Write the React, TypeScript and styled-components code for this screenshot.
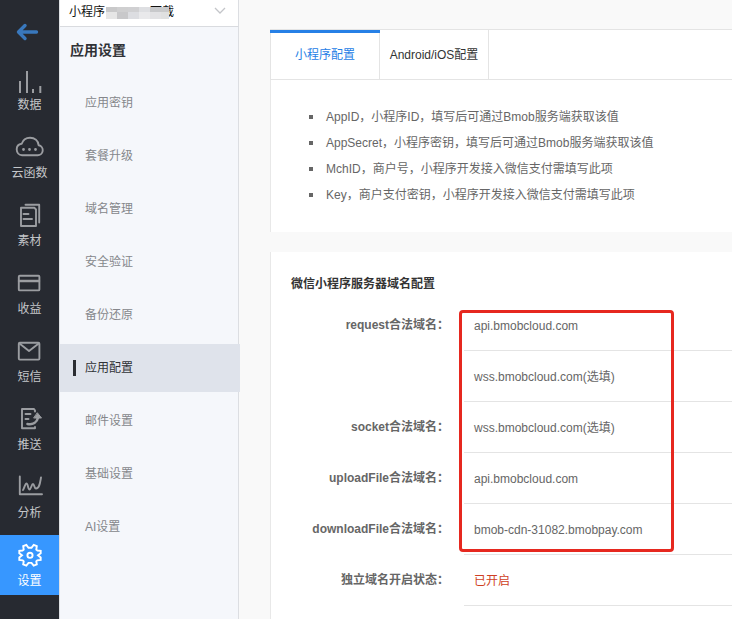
import React from "react";
import styled, { createGlobalStyle } from "styled-components";

const Global = createGlobalStyle`
  *, *::before, *::after { box-sizing: border-box; }
  body { margin: 0; overflow: hidden; background: #f9f9f9; }
  body, #root { font-family: "Liberation Sans", "Noto Sans CJK SC", sans-serif; font-size: 12px; }
`;

const Page = styled.div`
  display: flex;
  width: 732px;
  height: 619px;
  overflow: hidden;
  background: #f9f9f9;
`;

const Rail = styled.nav`
  flex: none;
  width: 59px;
  background: #272a31;
  display: flex;
  flex-direction: column;
  gap: 8px;
`;

const BackLink = styled.div`
  height: 51px;
  padding: 23px 0 0 16px;
`;

const RailItem = styled.div<{ $active?: boolean }>`
  flex: none;
  height: 60px;
  color: ${(p) => (p.$active ? "#fff" : "#c4c6c9")};
  background: ${(p) => (p.$active ? "#3797ff" : "transparent")};
  text-align: center;
`;

const RailIcon = styled.svg<{ $active?: boolean }>`
  display: block;
  width: 59px;
  height: 36px;
  fill: none;
  stroke: ${(p) => (p.$active ? "#fff" : "#9b9da1")};
  stroke-width: 1.9;
  stroke-linejoin: round;
  stroke-linecap: round;
`;

const RailLabel = styled.div`
  font-size: 12px;
  line-height: 20px;
`;

const Side = styled.aside`
  flex: none;
  width: 180px;
  background: #f5f7fb;
  border-left: 1px solid #dfe1e5;
  box-shadow: inset -1px 0 0 #dcdee2;
`;

const AppSelect = styled.div`
  display: flex;
  align-items: center;
  width: 179px;
  height: 27px;
  padding: 0 12px 4px 9px;
  border-bottom: 1px solid #d9dbdf;
  border-right: 1px solid #dcdee2;
  background: #fff;
  color: #111;
  line-height: 18px;
  white-space: nowrap;
`;

const AppName = styled.span`
  position: relative;
  width: 105px;
  display: flex;
  justify-content: space-between;
  margin-top: 1px;
`;

const Mosaic = styled.svg`
  position: absolute;
  left: 37px;
  top: 4px;
`;

const Chevron = styled.svg`
  margin-left: auto;
`;

const SideTitle = styled.h2`
  margin: 0;
  height: 51px;
  padding: 13px 0 0 10px;
  font-size: 14px;
  line-height: 20px;
  font-weight: 700;
  color: #303236;
`;

const Menu = styled.div`
  display: flex;
  flex-direction: column;
  gap: 5px;
  padding-top: 1px;
`;

const MenuItem = styled.div<{ $active?: boolean }>`
  display: flex;
  align-items: center;
  height: 48px;
  padding-bottom: 4px;
  padding-left: ${(p) => (p.$active ? "13px" : "25px")};
  margin-right: ${(p) => (p.$active ? "-1px" : "0")};
  color: ${(p) => (p.$active ? "#303236" : "#85878b")};
  background: ${(p) => (p.$active ? "#dfe3eb" : "transparent")};
`;

const Marker = styled.span`
  width: 3px;
  height: 16px;
  margin: 4px 9px 0 0;
  background: #2b2d32;
`;

const Content = styled.main`
  flex: 1;
  min-width: 0;
  padding: 29px 0 0 31px;
`;

const TabBar = styled.div`
  display: flex;
  height: 51px;
  background: #fff;
  border: solid #e4e4e4;
  border-width: 1px 0 1px 1px;
`;

const Tab = styled.div<{ $active?: boolean }>`
  position: relative;
  display: flex;
  align-items: center;
  justify-content: center;
  width: 109px;
  padding-bottom: 2px;
  border-right: 1px solid #e4e4e4;
  color: ${(p) => (p.$active ? "#2680e6" : "#333")};
  &::before {
    content: "";
    display: ${(p) => (p.$active ? "block" : "none")};
    position: absolute;
    left: -1px;
    right: -1px;
    top: 0;
    height: 3px;
    background: #2680e6;
  }
`;

const Card = styled.section`
  background: #fff;
  border-left: 1px solid #e8e8e8;
`;

const Notes = styled.ul`
  margin: 0;
  padding: 22px 0 26px 40px;
  height: 152px;
  list-style: none;
`;

const Note = styled.li`
  display: flex;
  align-items: center;
  height: 26px;
  color: #666;
  white-space: nowrap;
  &::before {
    content: "";
    width: 4px;
    height: 4px;
    margin: 4px 13px 0 -2px;
    background: #666;
  }
`;

const FormCard = styled(Card)`
  margin-top: 20px;
  height: 380px;
  padding: 21px 0 0 20px;
`;

const FormTitle = styled.h3`
  margin: 0;
  font-size: 12px;
  line-height: 22px;
  font-weight: 700;
  color: #333;
`;

const Rows = styled.div`
  position: relative;
  padding-top: 5px;
`;

const Row = styled.div`
  display: flex;
  height: 51px;
`;

const Label = styled.div`
  width: 158px;
  margin-right: 15px;
  text-align: right;
  line-height: 50px;
  font-weight: 700;
  color: #666;
  white-space: nowrap;
`;

const Value = styled.div<{ $alert?: boolean }>`
  flex: 1;
  padding: 1px 0 0 10px;
  line-height: 50px;
  color: ${(p) => (p.$alert ? "#cf3f24" : "#666")};
  border-bottom: 1px solid #e4e4e4;
  white-space: nowrap;
`;

const Highlight = styled.div`
  position: absolute;
  left: 168px;
  top: 15px;
  width: 215px;
  height: 242px;
  border: 3px solid #e6281f;
  border-radius: 4px;
`;

const icons: Record<string, React.ReactNode> = {
  data: <path strokeLinecap="butt" strokeWidth="2" d="M20 22V34M27 12V34M33 30V34M40.3 27V34" />,
  cloud: (
    <>
      <path d="M22 28.2H37.5a5 5 0 0 0 1.2-9.9C38.2 13.6 34.7 10.8 30 10.8c-4 0-7 2.2-8.3 5.9-3.4.4-5 2.7-5 5.6 0 3.3 2.2 5.9 5.3 5.9Z" />
      <path strokeWidth="2.8" d="M23.5 22.5h.01M29.5 22.5h.01M35.5 22.5h.01" />
    </>
  ),
  material: <path d="M21 12.8H34.5L36 14.5V31H21ZM25.5 9.8H39.2V27.5M23.5 19h5M23.5 24h8.5" />,
  income: (
    <>
      <rect x="18.8" y="12.8" width="20.6" height="14.6" rx="1" />
      <path strokeWidth="2.4" d="M19 18H39" />
    </>
  ),
  mail: (
    <>
      <rect x="18.8" y="11.8" width="20.6" height="16.8" rx="1" />
      <path d="M19.5 12.5L29 20L38.7 12.5" />
    </>
  ),
  push: (
    <>
      <path d="M35 12.5V11.5L34 10H22V29.2H35V28M25.5 15h5M25.5 20h3" />
      <path d="M27.5 25C33 26 37 23.500 38 18.5" strokeWidth="2.6" />
      <path d="M37.5 14L41.5 19H34Z" fill="#9b9da1" strokeWidth="1" />
    </>
  ),
  chart: <path d="M19.8 9.5V27.2H42M23 23C24.5 21 25 16.5 26.5 16.5S28 22.5 29.5 22.5S31.5 17 33 17S34 21.5 36 21.5C39.5 21.5 40 16 41 10.5" />,
  gear: (
    <>
      <path
        strokeLinejoin="miter"
        d="M26.3 9.9L28.5 12.8H31.5L33.700 9.9L36.800 11.200L36.300 14.600L37.500 15.500L40.700 15.900V18.200L38 20.300L40.700 22.500V25L37.300 25.300L36.300 26.300L36.800 29.500L33.700 30.700L31.500 27.900H28.500L26.300 30.700L23.200 29.500L23.700 26.300L22.700 25.300L19.300 25V22.500L22 20.300L19.300 18.200V15.900L22.500 15.500L23.700 14.600L23.200 11.200Z"
      />
      <circle cx="30" cy="20.3" r="2.6" />
    </>
  ),
};

const railItems = [
  ["data", "数据"],
  ["cloud", "云函数"],
  ["material", "素材"],
  ["income", "收益"],
  ["mail", "短信"],
  ["push", "推送"],
  ["chart", "分析"],
  ["gear", "设置"],
];

const menuItems = ["应用密钥", "套餐升级", "域名管理", "安全验证", "备份还原", "应用配置", "邮件设置", "基础设置", "AI设置"];

const notes = [
  "AppID，小程序ID，填写后可通过Bmob服务端获取该值",
  "AppSecret，小程序密钥，填写后可通过Bmob服务端获取该值",
  "MchID，商户号，小程序开发接入微信支付需填写此项",
  "Key，商户支付密钥，小程序开发接入微信支付需填写此项",
];

const rows = [
  ["request合法域名：", "api.bmobcloud.com"],
  ["", "wss.bmobcloud.com(选填)"],
  ["socket合法域名：", "wss.bmobcloud.com(选填)"],
  ["uploadFile合法域名：", "api.bmobcloud.com"],
  ["downloadFile合法域名：", "bmob-cdn-31082.bmobpay.com"],
  ["独立域名开启状态：", "已开启"],
];

const mosaicTop = ["#c9c9ca", "#cfcfd0", "#d0d0d2", "#dedfe2", "#c8c9cb", "#c9cacb"];
const mosaicBottom = ["#e6e6e6", "#c8c8ca", "#dcdde1", "#e9e9eb", "#e2e2e4", "#dfe0e0"];

export default function App() {
  return (
    <Page>
      <Global />
      <Rail>
        <BackLink>
          <svg width="24" height="18" viewBox="0 0 24 18" fill="none" stroke="#3978bd" strokeWidth="3.4" strokeLinecap="round" strokeLinejoin="round">
            <path d="M20.5 9H3M9 2.5L2.5 9L9 15.5" />
          </svg>
        </BackLink>
        {railItems.map(([icon, label]) => (
          <RailItem key={icon} $active={icon === "gear"}>
            <RailIcon viewBox="0 0 59 36" $active={icon === "gear"}>{icons[icon]}</RailIcon>
            <RailLabel>{label}</RailLabel>
          </RailItem>
        ))}
      </Rail>
      <Side>
        <AppSelect>
          <AppName>
            <span>小程序</span>
            <span>下载</span>
            <Mosaic width="63" height="12">
              {mosaicTop.map((c, i) => (
                <rect key={i} x={i * 11} width="11" height="5" fill={c} />
              ))}
              {mosaicBottom.map((c, i) => (
                <rect key={i} x={i * 11} y="5" width="11" height="7" fill={c} />
              ))}
            </Mosaic>
          </AppName>
          <Chevron width="12" height="8" fill="none" stroke="#c3c5c9" strokeWidth="1.3">
            <path d="M1 1L6 6L11 1" />
          </Chevron>
        </AppSelect>
        <SideTitle>应用设置</SideTitle>
        <Menu>
          {menuItems.map((m) => (
            <MenuItem key={m} $active={m === "应用配置"}>
              {m === "应用配置" && <Marker />}
              {m}
            </MenuItem>
          ))}
        </Menu>
      </Side>
      <Content>
        <TabBar>
          <Tab $active>小程序配置</Tab>
          <Tab>Android/iOS配置</Tab>
        </TabBar>
        <Card>
          <Notes>
            {notes.map((n) => (
              <Note key={n}>{n}</Note>
            ))}
          </Notes>
        </Card>
        <FormCard>
          <FormTitle>微信小程序服务器域名配置</FormTitle>
          <Rows>
            {rows.map(([label, value], i) => (
              <Row key={i}>
                <Label>{label}</Label>
                <Value $alert={i === 5}>{value}</Value>
              </Row>
            ))}
            <Highlight />
          </Rows>
        </FormCard>
      </Content>
    </Page>
  );
}
